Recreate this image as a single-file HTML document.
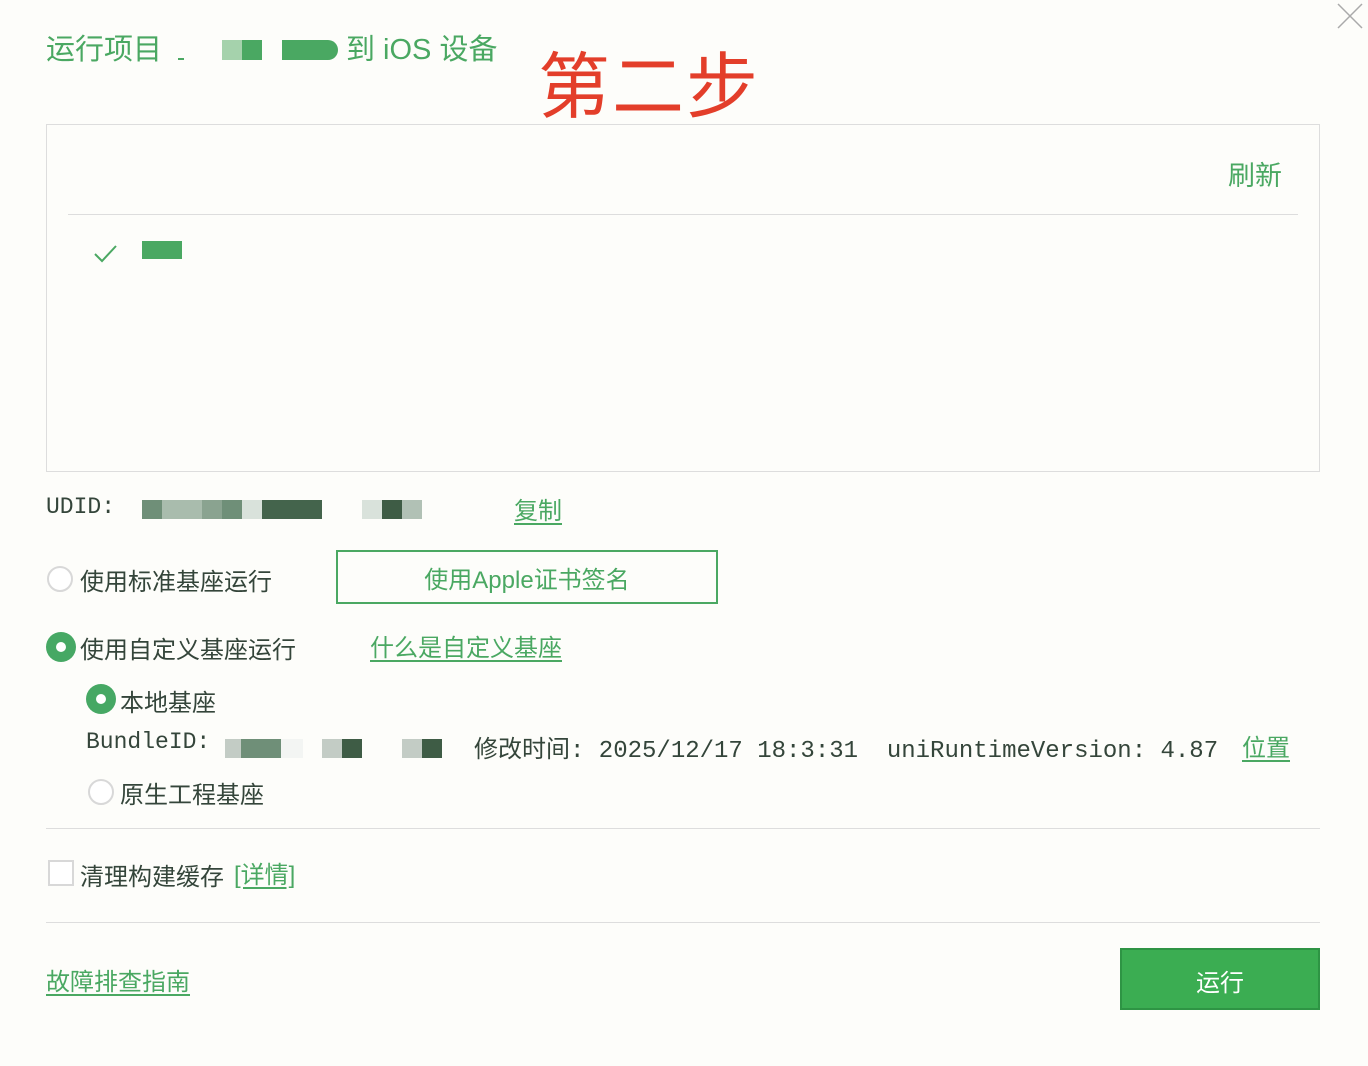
<!DOCTYPE html>
<html><head><meta charset="utf-8"><style>
body{margin:0;width:1368px;height:1066px;background:#fdfdfa;position:relative;overflow:hidden;font-family:"Liberation Sans","Noto Sans CJK SC",sans-serif;color:#34453a}
.a{position:absolute;white-space:pre}
.g{color:#4aa862}
.m{font-family:"Liberation Mono","Noto Sans CJK SC",monospace}
.u{text-decoration:underline;text-underline-offset:4px}
.b{position:absolute}
.r{position:absolute;width:26px;height:26px;border:2px solid #d8d8d8;border-radius:50%;box-sizing:border-box;background:#fff}
.rs{position:absolute;width:30px;height:30px;border-radius:50%;background:#46a864;box-sizing:border-box}
.rs:after{content:"";position:absolute;left:10px;top:10px;width:10px;height:10px;border-radius:50%;background:#fff}
</style></head><body>
<div class="a g" style="left:46px;top:26px;font-size:29px">运行项目</div>
<div class="b" style="left:178px;top:58px;width:6px;height:2px;background:#4aa862"></div>
<div class="b" style="left:222px;top:40px;width:20px;height:20px;background:#a5d2ac"></div>
<div class="b" style="left:242px;top:40px;width:20px;height:20px;background:#4aa862"></div>
<div class="b" style="left:282px;top:40px;width:56px;height:20px;background:#4aa862;border-radius:0 10px 10px 0"></div>
<div class="a g" style="left:346px;top:26px;font-size:29px">到 iOS 设备</div>
<div class="a" style="left:538px;top:28px;font-size:72px;color:#e33e2a;letter-spacing:2px">第二步</div>
<svg class="b" style="left:1336px;top:2px" width="28" height="28"><path d="M2 2L26 26M26 2L2 26" stroke="#aaa" stroke-width="1.5"/></svg>
<div class="b" style="left:46px;top:124px;width:1272px;height:346px;border:1px solid #ddd"></div>
<div class="a g" style="left:1228px;top:154px;font-size:27px">刷新</div>
<div class="b" style="left:68px;top:214px;width:1230px;height:1px;background:#ddd"></div>
<svg class="b" style="left:94px;top:244px" width="24" height="20"><path d="M1 10L8 17L22 2" stroke="#4aa862" stroke-width="2" fill="none"/></svg>
<div class="b" style="left:142px;top:241px;width:40px;height:18px;background:#4aa862"></div>
<div class="a m" style="left:46px;top:494px;font-size:23px">UDID:</div>
<div class="b" style="left:142px;top:500px;width:60px;height:19px;background:linear-gradient(90deg,#6f8f78 0 20px,#a9bcad 20px)"></div>
<div class="b" style="left:202px;top:500px;width:60px;height:19px;background:linear-gradient(90deg,#8aa390 0 20px,#6f8f78 20px 40px,#d9e2db 40px)"></div>
<div class="b" style="left:262px;top:500px;width:60px;height:19px;background:#44644c"></div>
<div class="b" style="left:362px;top:500px;width:60px;height:19px;background:linear-gradient(90deg,#d9e2db 0 20px,#3e5c45 20px 40px,#b1c1b5 40px)"></div>
<div class="a g u" style="left:514px;top:491px;font-size:24px">复制</div>
<div class="r" style="left:47px;top:566px"></div>
<div class="a" style="left:80px;top:562px;font-size:24px">使用标准基座运行</div>
<div class="b" style="left:336px;top:550px;width:382px;height:54px;border:2px solid #4aa862;box-sizing:border-box"></div>
<div class="a g" style="left:336px;top:560px;width:382px;text-align:center;font-size:24px">使用<span style="font-family:'Liberation Sans Narrow','Liberation Sans',sans-serif">Apple</span>证书签名</div>
<div class="rs" style="left:46px;top:632px"></div>
<div class="a" style="left:80px;top:630px;font-size:24px">使用自定义基座运行</div>
<div class="a g u" style="left:370px;top:628px;font-size:24px">什么是自定义基座</div>
<div class="rs" style="left:86px;top:684px"></div>
<div class="a" style="left:120px;top:683px;font-size:24px">本地基座</div>
<div class="a m" style="left:86px;top:729px;font-size:23px">BundleID:</div>
<div class="b" style="left:225px;top:739px;width:78px;height:19px;background:linear-gradient(90deg,#c3ccc5 0 16px,#6f8f78 16px 56px,#f3f5f3 56px)"></div>
<div class="b" style="left:322px;top:739px;width:40px;height:19px;background:linear-gradient(90deg,#c3ccc5 0 20px,#3e5c45 20px)"></div>
<div class="b" style="left:402px;top:739px;width:40px;height:19px;background:linear-gradient(90deg,#c3ccc5 0 20px,#3e5c45 20px)"></div>
<div class="a m" style="left:474px;top:729px;font-size:24px">修改时间: 2025/12/17 18:3:31  uniRuntimeVersion: 4.87</div>
<div class="a g u" style="left:1242px;top:728px;font-size:24px">位置</div>
<div class="r" style="left:88px;top:779px"></div>
<div class="a" style="left:120px;top:775px;font-size:24px">原生工程基座</div>
<div class="b" style="left:46px;top:828px;width:1274px;height:1px;background:#ddd"></div>
<div class="b" style="left:48px;top:860px;width:26px;height:26px;border:2px solid #d8d8d8;box-sizing:border-box;background:#fff"></div>
<div class="a" style="left:80px;top:857px;font-size:24px">清理构建缓存</div>
<div class="a g u" style="left:234px;top:855px;font-size:24px">[详情]</div>
<div class="b" style="left:46px;top:922px;width:1274px;height:1px;background:#ddd"></div>
<div class="a g u" style="left:46px;top:962px;font-size:24px">故障排查指南</div>
<div class="b" style="left:1120px;top:948px;width:200px;height:62px;background:#3bad52;border:2px solid #2e9444;box-sizing:border-box"></div>
<div class="a" style="left:1120px;top:963px;width:200px;text-align:center;font-size:24px;color:#fff">运行</div>
</body></html>
